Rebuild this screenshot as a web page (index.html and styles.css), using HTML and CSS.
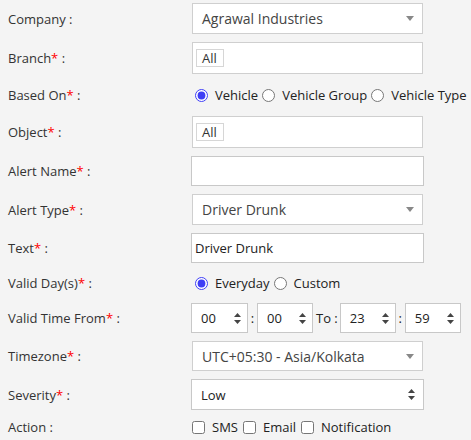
FILE: index.html
```html
<!DOCTYPE html>
<html>
<head>
<meta charset="utf-8">
<link rel="stylesheet" href="styles.css">
</head>
<body>
<div class="form">
  <div class="row">
    <div class="label">Company :</div>
    <div class="s2 h31"><span class="s2-text">Agrawal Industries</span>
      <svg class="s2-arrow" width="8" height="5" viewBox="0 0 8 5"><path d="M0 0h8L4 5z" fill="#888"/></svg></div>
  </div>
  <div class="row">
    <div class="label">Branch<span class="req">*</span> :</div>
    <div class="tagbox"><span class="tag">All</span></div>
  </div>
  <div class="row radio-row">
    <div class="label">Based On<span class="req">*</span> :</div>
    <div class="choices">
      <label class="opt"><input type="radio" name="based" checked><span>Vehicle</span></label>
      <label class="opt"><input type="radio" name="based"><span>Vehicle Group</span></label>
      <label class="opt"><input type="radio" name="based"><span>Vehicle Type</span></label>
    </div>
  </div>
  <div class="row">
    <div class="label">Object<span class="req">*</span> :</div>
    <div class="tagbox"><span class="tag">All</span></div>
  </div>
  <div class="row">
    <div class="label">Alert Name<span class="req">*</span> :</div>
    <input class="text h30" type="text" value="">
  </div>
  <div class="row">
    <div class="label">Alert Type<span class="req">*</span> :</div>
    <div class="s2 h31"><span class="s2-text">Driver Drunk</span>
      <svg class="s2-arrow" width="8" height="5" viewBox="0 0 8 5"><path d="M0 0h8L4 5z" fill="#888"/></svg></div>
  </div>
  <div class="row">
    <div class="label">Text<span class="req">*</span> :</div>
    <input class="text h30" type="text" value="Driver Drunk">
  </div>
  <div class="row radio-row2">
    <div class="label">Valid Day(s)<span class="req">*</span> :</div>
    <div class="choices">
      <label class="opt"><input type="radio" name="days" checked><span>Everyday</span></label>
      <label class="opt"><input type="radio" name="days"><span>Custom</span></label>
    </div>
  </div>
  <div class="row">
    <div class="label">Valid Time From<span class="req">*</span> :</div>
    <div class="times">
      <div class="nsel tsel w57"><span>00</span><svg class="updown" width="7" height="11" viewBox="0 0 7 11"><path d="M3.5 0L7 4H0zM0 7h7L3.5 11z" fill="#444"/></svg></div>
      <span class="colon">:</span>
      <div class="nsel tsel w56"><span>00</span><svg class="updown" width="7" height="11" viewBox="0 0 7 11"><path d="M3.5 0L7 4H0zM0 7h7L3.5 11z" fill="#444"/></svg></div>
      <span class="to">To :</span>
      <div class="nsel tsel w56"><span>23</span><svg class="updown" width="7" height="11" viewBox="0 0 7 11"><path d="M3.5 0L7 4H0zM0 7h7L3.5 11z" fill="#444"/></svg></div>
      <span class="colon">:</span>
      <div class="nsel tsel w56"><span>59</span><svg class="updown" width="7" height="11" viewBox="0 0 7 11"><path d="M3.5 0L7 4H0zM0 7h7L3.5 11z" fill="#444"/></svg></div>
    </div>
  </div>
  <div class="row">
    <div class="label">Timezone<span class="req">*</span> :</div>
    <div class="s2 h30"><span class="s2-text">UTC+05:30 - Asia/Kolkata</span>
      <svg class="s2-arrow" width="8" height="5" viewBox="0 0 8 5"><path d="M0 0h8L4 5z" fill="#888"/></svg></div>
  </div>
  <div class="row">
    <div class="label">Severity<span class="req">*</span> :</div>
    <div class="nsel sev"><span>Low</span><svg class="updown" width="7" height="11" viewBox="0 0 7 11"><path d="M3.5 0L7 4H0zM0 7h7L3.5 11z" fill="#444"/></svg></div>
  </div>
  <div class="row action-row">
    <div class="label">Action :</div>
    <div class="choices">
      <label class="opt chk"><input type="checkbox"><span>SMS</span></label>
      <label class="opt chk"><input type="checkbox"><span>Email</span></label>
      <label class="opt chk"><input type="checkbox"><span>Notification</span></label>
    </div>
  </div>
</div>
</body>
</html>
```
FILE: styles.css
```css
html, body {
  margin: 0;
  padding: 0;
  background: #f4f4f4;
  font-family: "Open Sans", "Noto Sans", sans-serif;
  color: #333;
  overflow: hidden;
}
.form {
  display: flex;
  flex-direction: column;
  gap: 8px;
  padding: 3px 0 0 8px;
}
.row {
  display: grid;
  grid-template-columns: 183px 1fr;
  align-items: center;
}
.row > :last-child { justify-self: start; }
.label {
  font-size: 13px;
  color: #333;
  white-space: nowrap;
}
.req { color: #f00; }
.radio-row { min-height: 26px; }
.radio-row2 { min-height: 24px; }
.action-row { min-height: 18px; }
.h30 { height: 30px; }
.h31 { height: 31px; }
.s2 {
  box-sizing: border-box;
  width: 231px;
  margin: 0 1px;
  border: 1px solid #cfcfcf;
  background: #fff;
  display: flex;
  align-items: center;
  padding: 0 8px 0 9px;
}
.s2-text {
  flex: 1;
  font-size: 14px;
  color: #444;
  white-space: nowrap;
}
.s2-arrow { flex: none; }
.tagbox {
  box-sizing: border-box;
  width: 231px;
  margin: 0 1px;
  height: 32px;
  border: 1px solid #cfcfcf;
  background: #fff;
  padding: 3px;
}
.tag {
  box-sizing: border-box;
  display: inline-flex;
  align-items: center;
  height: 18px;
  padding: 0 6px 0 5px;
  border: 1px solid #d6d6d6;
  font-size: 13px;
  color: #333;
}
.text {
  box-sizing: border-box;
  width: 233px;
  margin: 0;
  border: 1px solid #c8c8c8;
  background: #fff;
  padding: 0 3px;
  font-family: "Open Sans", sans-serif;
  font-size: 13px;
  color: #222;
  outline: none;
}
.choices {
  display: flex;
  align-items: center;
  white-space: nowrap;
  font-size: 13px;
  color: #222;
}
.opt {
  display: inline-flex;
  align-items: center;
}
.opt input {
  margin: 0 7px 0 4px;
  width: 13px;
  height: 13px;
  accent-color: #3e3ef5;
}
.opt + .opt input { margin-left: 4px; }
.chk input { margin: 0 7px 0 1px; }
.chk + .chk input { margin-left: 5px; }
.times {
  display: flex;
  align-items: center;
  white-space: nowrap;
  font-size: 13px;
  color: #222;
}
.nsel {
  box-sizing: border-box;
  height: 30px;
  border: 1px solid #c8c8c8;
  background: #fff;
  display: flex;
  align-items: center;
  justify-content: space-between;
  font-size: 13px;
  color: #222;
}
.tsel { padding: 0 6px 0 9px; }
.w57 { width: 57px; }
.w56 { width: 56px; }
.colon { width: 8px; text-align: center; margin: 0 0.5px; }
.to { margin: 0 2px 0 3px; }
.sev {
  width: 233px;
  height: 31px;
  padding: 0 8px 0 9px;
}
```
